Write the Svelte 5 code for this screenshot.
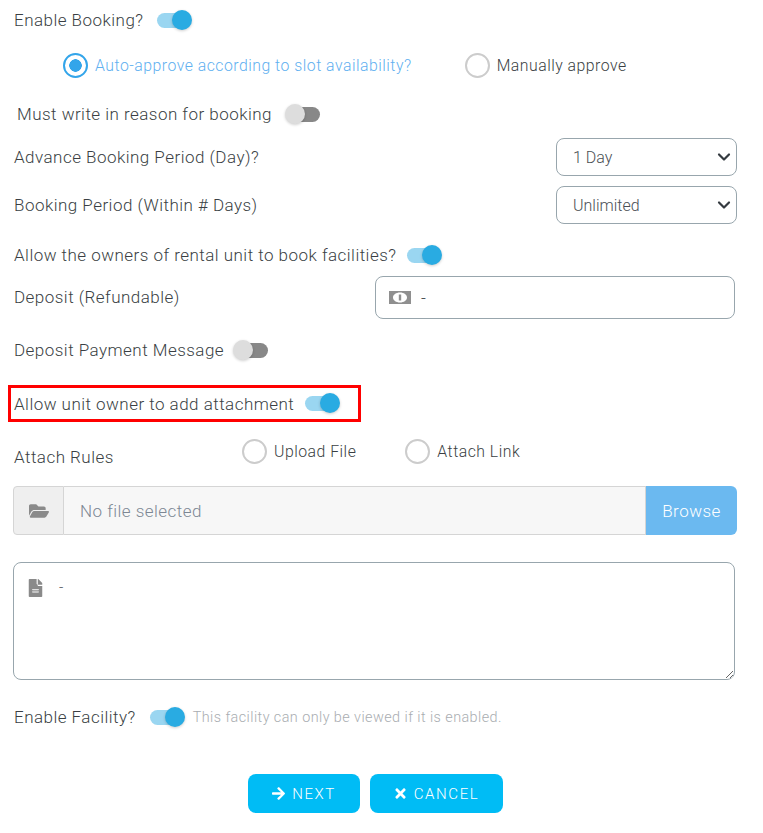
<script>
  let enableBooking = true;
  let approval = 'auto';
  let mustWriteReason = false;
  let ownersCanBook = true;
  let depositMessage = false;
  let ownerAttachment = true;
  let rulesSource = '';
  let enableFacility = true;
  let notes = '-';
</script>

<main class="form">
  <div class="row booking">
    <span class="label">Enable Booking?</span>
    <button class="toggle" class:on={enableBooking} aria-label="Enable Booking" on:click={() => (enableBooking = !enableBooking)}></button>
  </div>

  <div class="row approvals">
    <button class="radio" class:checked={approval === 'auto'} aria-label="Auto-approve" on:click={() => (approval = 'auto')}></button>
    <span class="option" class:active={approval === 'auto'}>Auto-approve according to slot availability?</span>
    <button class="radio manual" class:checked={approval === 'manual'} aria-label="Manually approve" on:click={() => (approval = 'manual')}></button>
    <span class="option" class:active={approval === 'manual'}>Manually approve</span>
  </div>

  <div class="row reason">
    <span class="label">Must write in reason for booking</span>
    <button class="toggle" class:on={mustWriteReason} aria-label="Must write reason" on:click={() => (mustWriteReason = !mustWriteReason)}></button>
  </div>

  <div class="row between advance">
    <span class="label">Advance Booking Period (Day)?</span>
    <select class="select"><option>1 Day</option></select>
  </div>

  <div class="row between period">
    <span class="label">Booking Period (Within # Days)</span>
    <select class="select"><option>Unlimited</option></select>
  </div>

  <div class="row owners">
    <span class="label">Allow the owners of rental unit to book facilities?</span>
    <button class="toggle" class:on={ownersCanBook} aria-label="Allow owners" on:click={() => (ownersCanBook = !ownersCanBook)}></button>
  </div>

  <div class="row deposit">
    <span class="label deposit-label">Deposit (Refundable)</span>
    <div class="money-input">
      <svg class="money" viewBox="0 0 22 13" aria-hidden="true">
        <path fill="#8f8f8f" fill-rule="evenodd" d="M0 0h22v13H0zM11 1.5c-4 0-7 2.2-7 5s3 5 7 5 7-2.2 7-5-3-5-7-5z" />
        <path fill="#8f8f8f" d="M9.8 3.5h2.4v6H9.8z" />
      </svg>
      <span>-</span>
    </div>
  </div>

  <div class="row message">
    <span class="label">Deposit Payment Message</span>
    <button class="toggle" class:on={depositMessage} aria-label="Deposit message" on:click={() => (depositMessage = !depositMessage)}></button>
  </div>

  <div class="row highlight">
    <span class="label">Allow unit owner to add attachment</span>
    <button class="toggle" class:on={ownerAttachment} aria-label="Allow attachment" on:click={() => (ownerAttachment = !ownerAttachment)}></button>
  </div>

  <div class="row rules">
    <span class="label rules-label">Attach Rules</span>
    <button class="radio" class:checked={rulesSource === 'file'} aria-label="Upload File" on:click={() => (rulesSource = 'file')}></button>
    <span class="option">Upload File</span>
    <button class="radio link" class:checked={rulesSource === 'link'} aria-label="Attach Link" on:click={() => (rulesSource = 'link')}></button>
    <span class="option">Attach Link</span>
  </div>

  <div class="file-group">
    <div class="addon">
      <svg viewBox="0 0 576 512" aria-hidden="true"><path fill="#8a8a8a" d="M572.694 292.093L500.27 416.248A63.997 63.997 0 0 1 444.989 448H45.025c-18.523 0-30.064-20.093-20.731-36.093l72.424-124.155A64 64 0 0 1 152 256h399.964c18.523 0 30.064 20.093 20.73 36.093zM152 224h328v-48c0-26.51-21.49-48-48-48H272l-64-64H48C21.49 64 0 85.49 0 112v278.046l69.077-118.418C86.214 242.25 117.989 224 152 224z" /></svg>
    </div>
    <div class="file-name">No file selected</div>
    <div class="browse">Browse</div>
  </div>

  <div class="notes">
    <svg class="notes-icon" viewBox="0 0 384 512" aria-hidden="true"><path fill="#8a8a8a" d="M224 136V0H24C10.7 0 0 10.7 0 24v464c0 13.3 10.7 24 24 24h336c13.3 0 24-10.7 24-24V160H248c-13.2 0-24-10.8-24-24zm64 236c0 6.6-5.4 12-12 12H108c-6.6 0-12-5.4-12-12v-8c0-6.6 5.4-12 12-12h168c6.6 0 12 5.4 12 12v8zm0-64c0 6.6-5.4 12-12 12H108c-6.6 0-12-5.4-12-12v-8c0-6.6 5.4-12 12-12h168c6.6 0 12 5.4 12 12v8zm96-114.1v6.1H256V0h6.1c6.4 0 12.5 2.5 17 7l97.9 98c4.5 4.5 7 10.6 7 16.9z" /></svg>
    <textarea class="textarea" bind:value={notes}></textarea>
  </div>

  <div class="row facility">
    <span class="label">Enable Facility?</span>
    <button class="toggle" class:on={enableFacility} aria-label="Enable Facility" on:click={() => (enableFacility = !enableFacility)}></button>
    <span class="hint">This facility can only be viewed if it is enabled.</span>
  </div>

  <div class="actions">
    <button class="action next">
      <svg viewBox="0 0 448 512" aria-hidden="true"><path fill="#fff" d="M190.5 66.9l22.2-22.2c9.4-9.4 24.6-9.4 33.9 0L441 239c9.4 9.4 9.4 24.6 0 33.9L246.6 467.3c-9.4 9.4-24.6 9.4-33.9 0l-22.2-22.2c-9.5-9.5-9.3-25 .4-34.3L311.4 296H24c-13.3 0-24-10.7-24-24v-32c0-13.3 10.7-24 24-24h287.4L190.9 101.2c-9.8-9.3-10-24.8-.4-34.3z" /></svg>
      NEXT
    </button>
    <button class="action cancel">
      <svg viewBox="0 0 352 512" aria-hidden="true"><path fill="#fff" d="M242.72 256l100.07-100.07c12.28-12.28 12.28-32.19 0-44.48l-22.24-22.24c-12.28-12.28-32.19-12.28-44.48 0L176 189.28 75.93 89.21c-12.28-12.28-32.19-12.28-44.48 0L9.21 111.45c-12.28 12.28-12.28 32.19 0 44.48L109.28 256 9.21 356.07c-12.28 12.28-12.28 32.19 0 44.48l22.24 22.24c12.28 12.28 32.2 12.28 44.48 0L176 322.72l100.07 100.07c12.28 12.28 32.2 12.28 44.48 0l22.24-22.24c12.28-12.28 12.28-32.19 0-44.48L242.72 256z" /></svg>
      CANCEL
    </button>
  </div>
</main>

<style>
  :global(body) {
    background: #fff;
  }

  .form {
    width: 763px;
    height: 833px;
    box-sizing: border-box;
    padding: 0 26px 0 14px;
    font-family: Roboto, "Liberation Sans", sans-serif;
    font-weight: 300;
    font-size: 17px;
    letter-spacing: 0.47px;
    color: #3a3f44;
    overflow: hidden;
  }

  .row {
    display: flex;
    align-items: center;
  }

  .between {
    justify-content: space-between;
  }

  .label {
    white-space: nowrap;
  }

  button {
    font-family: inherit;
    cursor: pointer;
  }

  /* switches */
  .toggle {
    position: relative;
    flex: none;
    width: 34px;
    height: 15px;
    margin-left: 14px;
    padding: 0;
    border: none;
    border-radius: 8px;
    background: #888;
  }

  .toggle::after {
    content: '';
    position: absolute;
    top: -3px;
    left: -1px;
    width: 20px;
    height: 20px;
    border-radius: 50%;
    background: #ddd;
    box-shadow: 0 1px 3px rgba(0, 0, 0, 0.2);
  }

  .toggle.on {
    background: #9ad6f1;
  }

  .toggle.on::after {
    left: 15px;
    background: #29abe2;
  }

  /* radios */
  .radio {
    flex: none;
    width: 25px;
    height: 25px;
    padding: 0;
    border: 2px solid #ccc;
    border-radius: 50%;
    background: #fff;
  }

  .radio.checked {
    border-color: #33a5ea;
    background: radial-gradient(circle, #33a5ea 0 6px, #fff 6.5px);
  }

  .option {
    margin-left: 7px;
    font-size: 15.8px;
    letter-spacing: 0.5px;
    white-space: nowrap;
  }

  .option.active {
    color: #5fb0f0;
  }

  .booking {
    height: 40px;
  }

  .booking .toggle {
    margin-left: 13px;
  }

  .approvals {
    height: 25px;
    margin-top: 13px;
    padding-left: 49px;
  }

  .manual {
    margin-left: 53px;
  }

  .reason {
    height: 26px;
    margin-top: 23px;
    padding-left: 3px;
  }

  /* selects */
  .select {
    width: 181px;
    height: 38px;
    box-sizing: border-box;
    padding: 0 16px;
    border: 1px solid #98a6ad;
    border-radius: 8px;
    background: #fff url("data:image/svg+xml,%3Csvg xmlns='http://www.w3.org/2000/svg' viewBox='0 0 16 16'%3E%3Cpath fill='none' stroke='%23343a40' stroke-width='2.2' stroke-linecap='round' stroke-linejoin='round' d='M3 5.5l5 5 5-5'/%3E%3C/svg%3E") no-repeat right 4px center / 16px 16px;
    appearance: none;
    color: #4a4f54;
    font: inherit;
    font-size: 16px;
  }

  .advance {
    height: 38px;
    margin-top: 11px;
  }

  .period {
    height: 38px;
    margin-top: 10px;
  }

  .owners {
    height: 26px;
    margin-top: 18px;
  }

  .owners .toggle,
  .highlight .toggle {
    margin-left: 11px;
  }

  .deposit {
    margin-top: 8px;
  }

  .deposit-label {
    width: 361px;
    flex: none;
    margin-top: -2px;
  }

  .money-input {
    display: flex;
    align-items: center;
    flex: none;
    width: 360px;
    height: 43px;
    box-sizing: border-box;
    padding-left: 13px;
    border: 1px solid #98a6ad;
    border-radius: 8px;
  }

  .money {
    width: 22px;
    height: 13px;
    margin-right: 10px;
  }

  .message {
    height: 26px;
    margin-top: 18px;
  }

  .message .toggle {
    margin-left: 10px;
  }

  .highlight {
    width: 353px;
    height: 37px;
    box-sizing: border-box;
    margin: 22px 0 0 -6px;
    padding-left: 3px;
    border: 3px solid #f00;
  }

  .rules {
    height: 25px;
    margin-top: 17px;
  }

  .rules-label {
    width: 228px;
    flex: none;
    margin-top: 10px;
  }

  .link {
    margin-left: 49px;
  }

  /* file picker */
  .file-group {
    display: flex;
    width: 724px;
    height: 49px;
    margin: 22px 0 0 -1px;
  }

  .addon {
    display: flex;
    align-items: center;
    justify-content: center;
    flex: none;
    width: 51px;
    box-sizing: border-box;
    border: 1px solid #d5d5d5;
    border-radius: 4px 0 0 4px;
    background: #efefef;
  }

  .addon svg {
    width: 20px;
    height: 18px;
  }

  .file-name {
    display: flex;
    align-items: center;
    flex: 1;
    padding-left: 16px;
    border: 1px solid #d5d5d5;
    border-left: none;
    background: #f7f7f7;
    color: #7d8794;
    font-size: 17px;
  }

  .browse {
    display: flex;
    align-items: center;
    justify-content: center;
    width: 91px;
    border-radius: 0 6px 6px 0;
    background: #6bb9f0;
    color: #fff;
    font-size: 17px;
  }

  /* notes */
  .notes {
    position: relative;
    width: 722px;
    height: 118px;
    margin: 27px 0 0 -1px;
  }

  .notes-icon {
    position: absolute;
    top: 17px;
    left: 15px;
    width: 15px;
    height: 18px;
  }

  .textarea {
    display: block;
    width: 100%;
    height: 100%;
    box-sizing: border-box;
    padding: 15px 12px 0 45px;
    border: 1px solid #98a6ad;
    border-radius: 8px;
    outline: none;
    color: #4a4f54;
    font: inherit;
    font-size: 15px;
  }

  /* footer */
  .facility {
    height: 26px;
    margin-top: 24px;
  }

  .hint {
    margin-left: 9px;
    color: #a9adb1;
    font-size: 14.4px;
    letter-spacing: 0.43px;
    white-space: nowrap;
  }

  .actions {
    display: flex;
    gap: 10px;
    margin: 44px 0 0 234px;
  }

  .action {
    display: flex;
    align-items: center;
    justify-content: center;
    gap: 7px;
    height: 39px;
    padding: 0;
    border: none;
    border-radius: 8px;
    background: #00bcf5;
    color: #fff;
    font-size: 15px;
    font-weight: 300;
    letter-spacing: 1.6px;
  }

  .action svg {
    height: 15px;
    width: 13px;
  }

  .next {
    width: 112px;
  }

  .cancel {
    width: 133px;
  }
</style>
